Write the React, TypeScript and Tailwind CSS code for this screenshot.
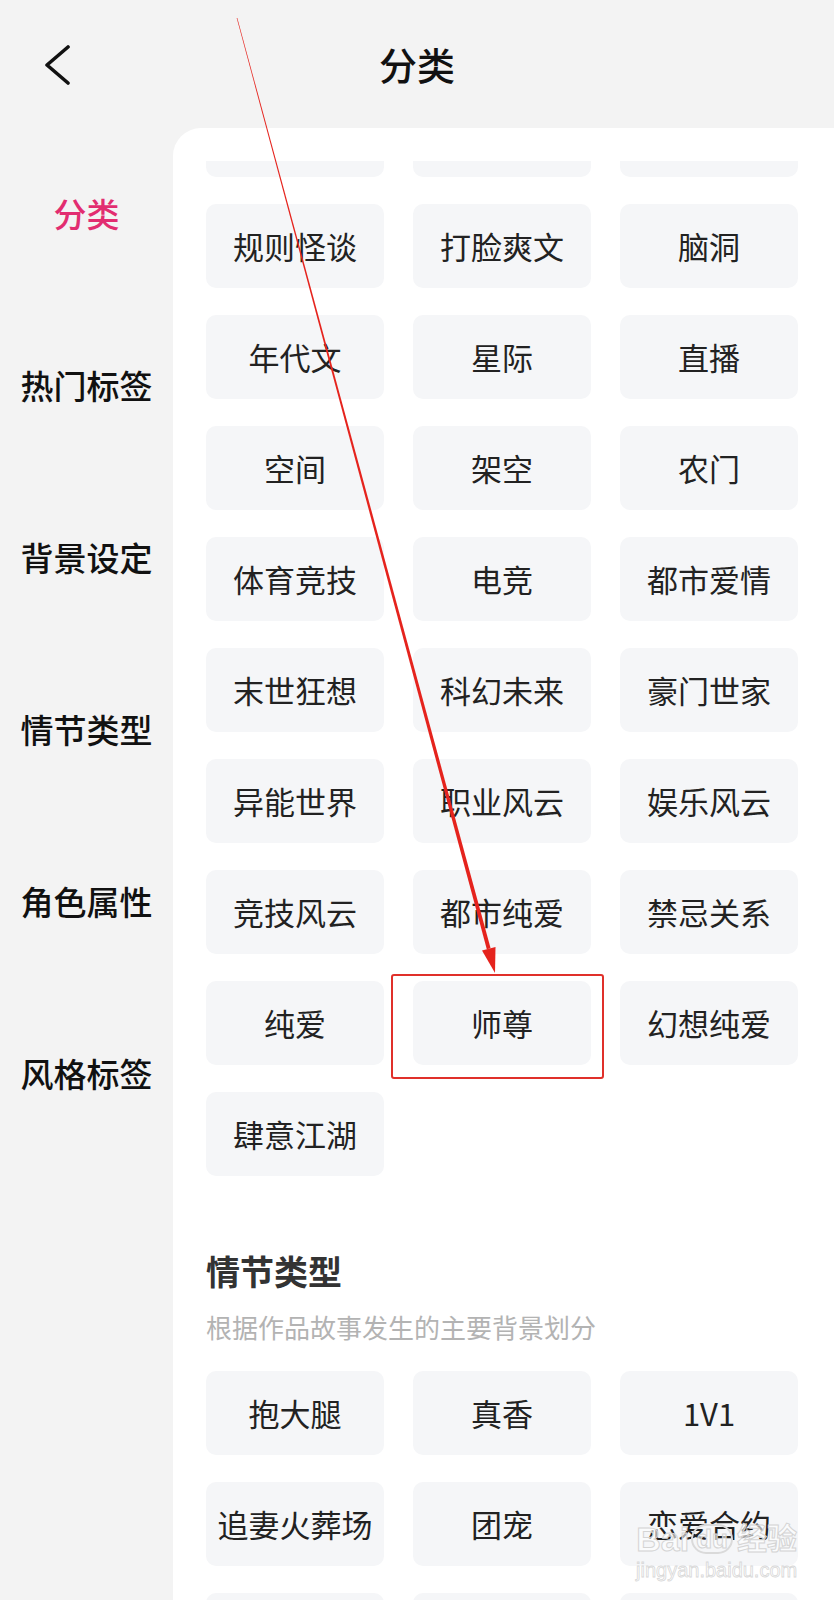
const NAV = ["分类", "热门标签", "背景设定", "情节类型", "角色属性", "风格标签"];

const CATEGORY_TAGS = [
  "规则怪谈", "打脸爽文", "脑洞",
  "年代文", "星际", "直播",
  "空间", "架空", "农门",
  "体育竞技", "电竞", "都市爱情",
  "末世狂想", "科幻未来", "豪门世家",
  "异能世界", "职业风云", "娱乐风云",
  "竞技风云", "都市纯爱", "禁忌关系",
  "纯爱", "师尊", "幻想纯爱",
  "肆意江湖",
];

const PLOT_TAGS = ["抱大腿", "真香", "1V1", "追妻火葬场", "团宠", "恋爱合约", "", "", ""];

const font = "font-['Noto_Sans_CJK_SC','Noto_Sans',sans-serif]";

function Tag({ label }: { label: string }) {
  return (
    <button
      type="button"
      className="h-[84px] rounded-[10px] bg-[#f5f6f8] text-[31px] text-[#222] flex items-center justify-center"
    >
      {label}
    </button>
  );
}

function TagGrid({ tags }: { tags: string[] }) {
  return (
    <div className="grid grid-cols-3 gap-x-[29px] gap-y-[27px]">
      {tags.map((t, i) => (
        <Tag key={i} label={t} />
      ))}
    </div>
  );
}

function BackIcon() {
  return (
    <svg width={28} height={40} viewBox="0 0 28 40" fill="none">
      <polyline
        points="24,2 3,20 24,38"
        stroke="#111"
        strokeWidth={3.6}
        strokeLinecap="round"
        strokeLinejoin="round"
      />
    </svg>
  );
}

// red annotation drawn over the list
function Annotation() {
  return (
    <svg
      className="absolute left-0 top-0 pointer-events-none"
      width={834}
      height={1600}
      viewBox="0 0 834 1600"
    >
      <polygon
        points="236.7,18 237.3,18 490.6,948.3 486.8,949.3"
        fill="#e5231d"
      />
      <polygon points="495.5,947 495,973 482,950.6" fill="#e5231d" />
      <rect
        x={392}
        y={975}
        width={211}
        height={103}
        rx={2}
        fill="none"
        stroke="#e0302a"
        strokeWidth={2}
      />
    </svg>
  );
}

function Watermark() {
  return (
    <div className="absolute left-[636px] top-[1522px] flex flex-col items-center pointer-events-none font-['Liberation_Sans','Noto_Sans_CJK_SC',sans-serif]">
      <div className="flex items-center text-[34px] font-bold leading-none text-white/60 [-webkit-text-stroke:1px_#d4d4d4]">
        <span>Bai</span>
        <span className="ml-[2px] rounded-full border-2 border-[#dadada] px-[3px] text-[26px]">du</span>
        <span className="ml-[4px] text-[30px]">经验</span>
      </div>
      <div className="mt-[4px] text-[20px] leading-none text-white/60 [-webkit-text-stroke:0.8px_#d8d8d8]">
        jingyan.baidu.com
      </div>
    </div>
  );
}

export default function App() {
  return (
    <div className={`relative w-[834px] h-[1600px] overflow-hidden bg-[#f3f3f3] flex flex-col ${font}`}>
      <header className="h-[128px] shrink-0 grid grid-cols-[1fr_auto_1fr] items-center">
        <button type="button" className="pl-[44px] pt-[2px] justify-self-start">
          <BackIcon />
        </button>
        <h1 className="text-[38px] font-medium text-[#111] leading-none">分类</h1>
        <div />
      </header>

      <div className="flex flex-1 min-h-0">
        <nav className="w-[173px] shrink-0 flex flex-col">
          {NAV.map((item, i) => (
            <div
              key={item}
              className={`h-[172px] flex items-center justify-center text-[33px] font-medium ${
                i === 0 ? "text-[#e22d70]" : "text-[#111]"
              }`}
            >
              {item}
            </div>
          ))}
        </nav>

        <main className="flex-1 bg-white rounded-tl-[28px] pt-[33px] pl-[33px] pr-[36px] overflow-hidden">
          <div className="grid grid-cols-3 gap-x-[29px] mb-[27px]">
            <div className="h-[16px] rounded-b-[10px] bg-[#f5f6f8]" />
            <div className="h-[16px] rounded-b-[10px] bg-[#f5f6f8]" />
            <div className="h-[16px] rounded-b-[10px] bg-[#f5f6f8]" />
          </div>

          <TagGrid tags={CATEGORY_TAGS} />

          <section className="mt-[71px]">
            <h2 className="text-[34px] font-bold text-[#333] leading-[48px]">情节类型</h2>
            <p className="mt-[14px] text-[26px] text-[#b3b3b3] leading-[36px]">
              根据作品故事发生的主要背景划分
            </p>
            <div className="mt-[26px]">
              <TagGrid tags={PLOT_TAGS} />
            </div>
          </section>
        </main>
      </div>

      <Annotation />
      <Watermark />
    </div>
  );
}
